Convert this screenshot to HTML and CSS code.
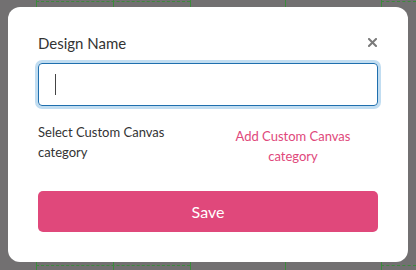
FILE: index.html
```html
<!DOCTYPE html>
<html>
<head>
    <title>Design Name</title>
    <link rel="stylesheet" href="styles.css">
</head>
<body>
    <div class="backdrop">
        <div class="dash dash-top-left"></div>
        <div class="dash dash-top-right"></div>
        <div class="dash dash-bottom-left"></div>
        <div class="dash dash-bottom-right"></div>
        <div class="tick" style="left:36px;top:0"></div>
        <div class="tick" style="left:113px;top:0"></div>
        <div class="tick" style="left:190px;top:0"></div>
        <div class="tick" style="left:285px;top:0"></div>
        <div class="tick" style="left:381px;top:0"></div>
        <div class="tick" style="left:36px;top:262px"></div>
        <div class="tick" style="left:113px;top:262px"></div>
        <div class="tick" style="left:190px;top:262px"></div>
        <div class="tick" style="left:285px;top:262px"></div>
        <div class="tick" style="left:381px;top:262px"></div>
    </div>

    <div class="modal">
        <div class="modal-header">
            <label for="design-name">Design Name</label>
            <button class="close-btn" type="button" aria-label="Close">
                <svg width="9" height="9" viewBox="0 0 9 9">
                    <path d="M1 1 L8 8 M8 1 L1 8" stroke="#7a7a7a" stroke-width="2" stroke-linecap="square"/>
                </svg>
            </button>
        </div>
        <div class="name-input" id="design-name"><span class="caret"></span></div>

        <div class="category-row">
            <div class="category-label">Select Custom Canvas category</div>
            <a class="category-link" href="#">Add Custom Canvas category</a>
        </div>

        <button class="save-btn" type="button">Save</button>
    </div>
</body>
</html>
```

FILE: styles.css
```css
body {
    margin: 0;
    width: 416px;
    height: 270px;
    overflow: hidden;
    background-color: #727071;
    font-family: Lato, 'Noto Sans', sans-serif;
    color: #333;
    display: flex;
    justify-content: center;
    align-items: flex-start;
    padding-top: 7px;
    box-sizing: border-box;
}
.backdrop {
    position: absolute;
    inset: 0;
}
.dash {
    position: absolute;
    height: 0;
    border-top: 1px dashed #3b8a3b;
}
.dash-top-left { left: 36px; width: 154px; top: 1px; }
.dash-top-right { left: 381px; width: 35px; top: 1px; }
.dash-bottom-left { left: 36px; width: 154px; top: 265px; }
.dash-bottom-right { left: 381px; width: 35px; top: 265px; }
.tick {
    position: absolute;
    width: 1px;
    height: 8px;
    background-color: #3b8a3b;
}
.modal {
    position: relative;
    width: 400px;
    height: 255px;
    box-sizing: border-box;
    background-color: #ffffff;
    border-radius: 12px;
    padding: 26px 30px 30px 30px;
    display: flex;
    flex-direction: column;
}
.modal-header {
    display: flex;
    justify-content: space-between;
    align-items: center;
    height: 20px;
}
.modal-header label {
    font-size: 15px;
    color: #333;
}
.close-btn {
    border: none;
    background: none;
    padding: 0;
    margin-right: 1px;
    display: flex;
}
.name-input {
    margin-top: 10px;
    height: 44px;
    box-sizing: border-box;
    border: 1px solid #1f6fae;
    border-radius: 4px;
    box-shadow: 0 0 0 3px #c1ddf1;
    display: flex;
    align-items: center;
    padding-left: 16px;
}
.caret {
    width: 1px;
    height: 21px;
    background-color: #444;
}
.category-row {
    margin-top: 16px;
    display: grid;
    grid-template-columns: 1fr 1fr;
    font-size: 13px;
    line-height: 20px;
}
.category-label {
    padding-right: 30px;
}
.category-link {
    color: #e0487b;
    text-decoration: none;
    text-align: center;
    padding: 4px 12px 0 12px;
}
.save-btn {
    margin-top: 25px;
    height: 42px;
    border: none;
    border-radius: 5px;
    background-color: #e0487b;
    color: #ffffff;
    font-family: Lato, 'Noto Sans', sans-serif;
    font-size: 16px;
}
```
